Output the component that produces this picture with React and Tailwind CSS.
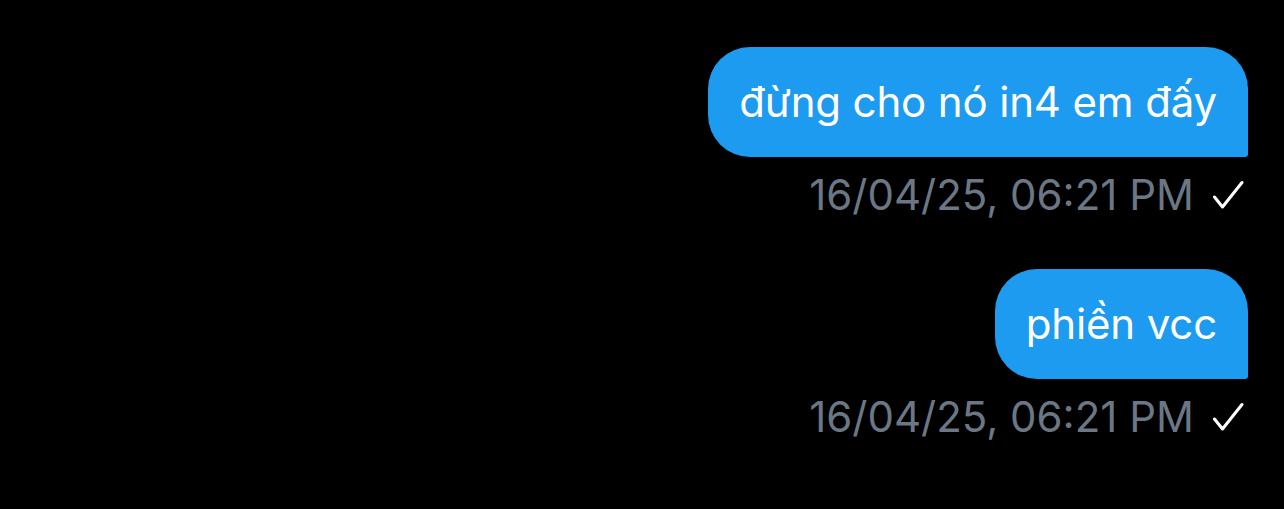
const messages = [
  { id: 1, text: "đừng cho nó in4 em đấy", time: "16/04/25, 06:21 PM" },
  { id: 2, text: "phiền vcc", time: "16/04/25, 06:21 PM" },
];

function Check() {
  return (
    <svg width="32" height="30" viewBox="0 0 32 30" fill="none" className="shrink-0">
      <path d="M2.5 17 L10.5 27 L30 2.5" stroke="#fff" strokeWidth="3" strokeLinecap="round" strokeLinejoin="round" />
    </svg>
  );
}

export default function App() {
  return (
    <div className="min-h-screen w-full bg-black font-['Inter',sans-serif] antialiased">
      <div className="flex flex-col items-end gap-[54px] pt-[47px] pr-[36px]">
        {messages.map((m) => (
          <div key={m.id} className="flex flex-col items-end">
            <div className="h-[110px] flex items-center px-[31px] bg-[#1d9bf0] rounded-[42px] rounded-br-[3px] text-white text-[42px] tracking-[-0.15px] leading-none">
              {m.text}
            </div>
            <div className="flex items-center gap-[18px] mt-[18px] h-[40px] pr-[4px]">
              <span className="text-[42px] leading-none text-[#6b7784]">{m.time}</span>
              <Check />
            </div>
          </div>
        ))}
      </div>
    </div>
  );
}
